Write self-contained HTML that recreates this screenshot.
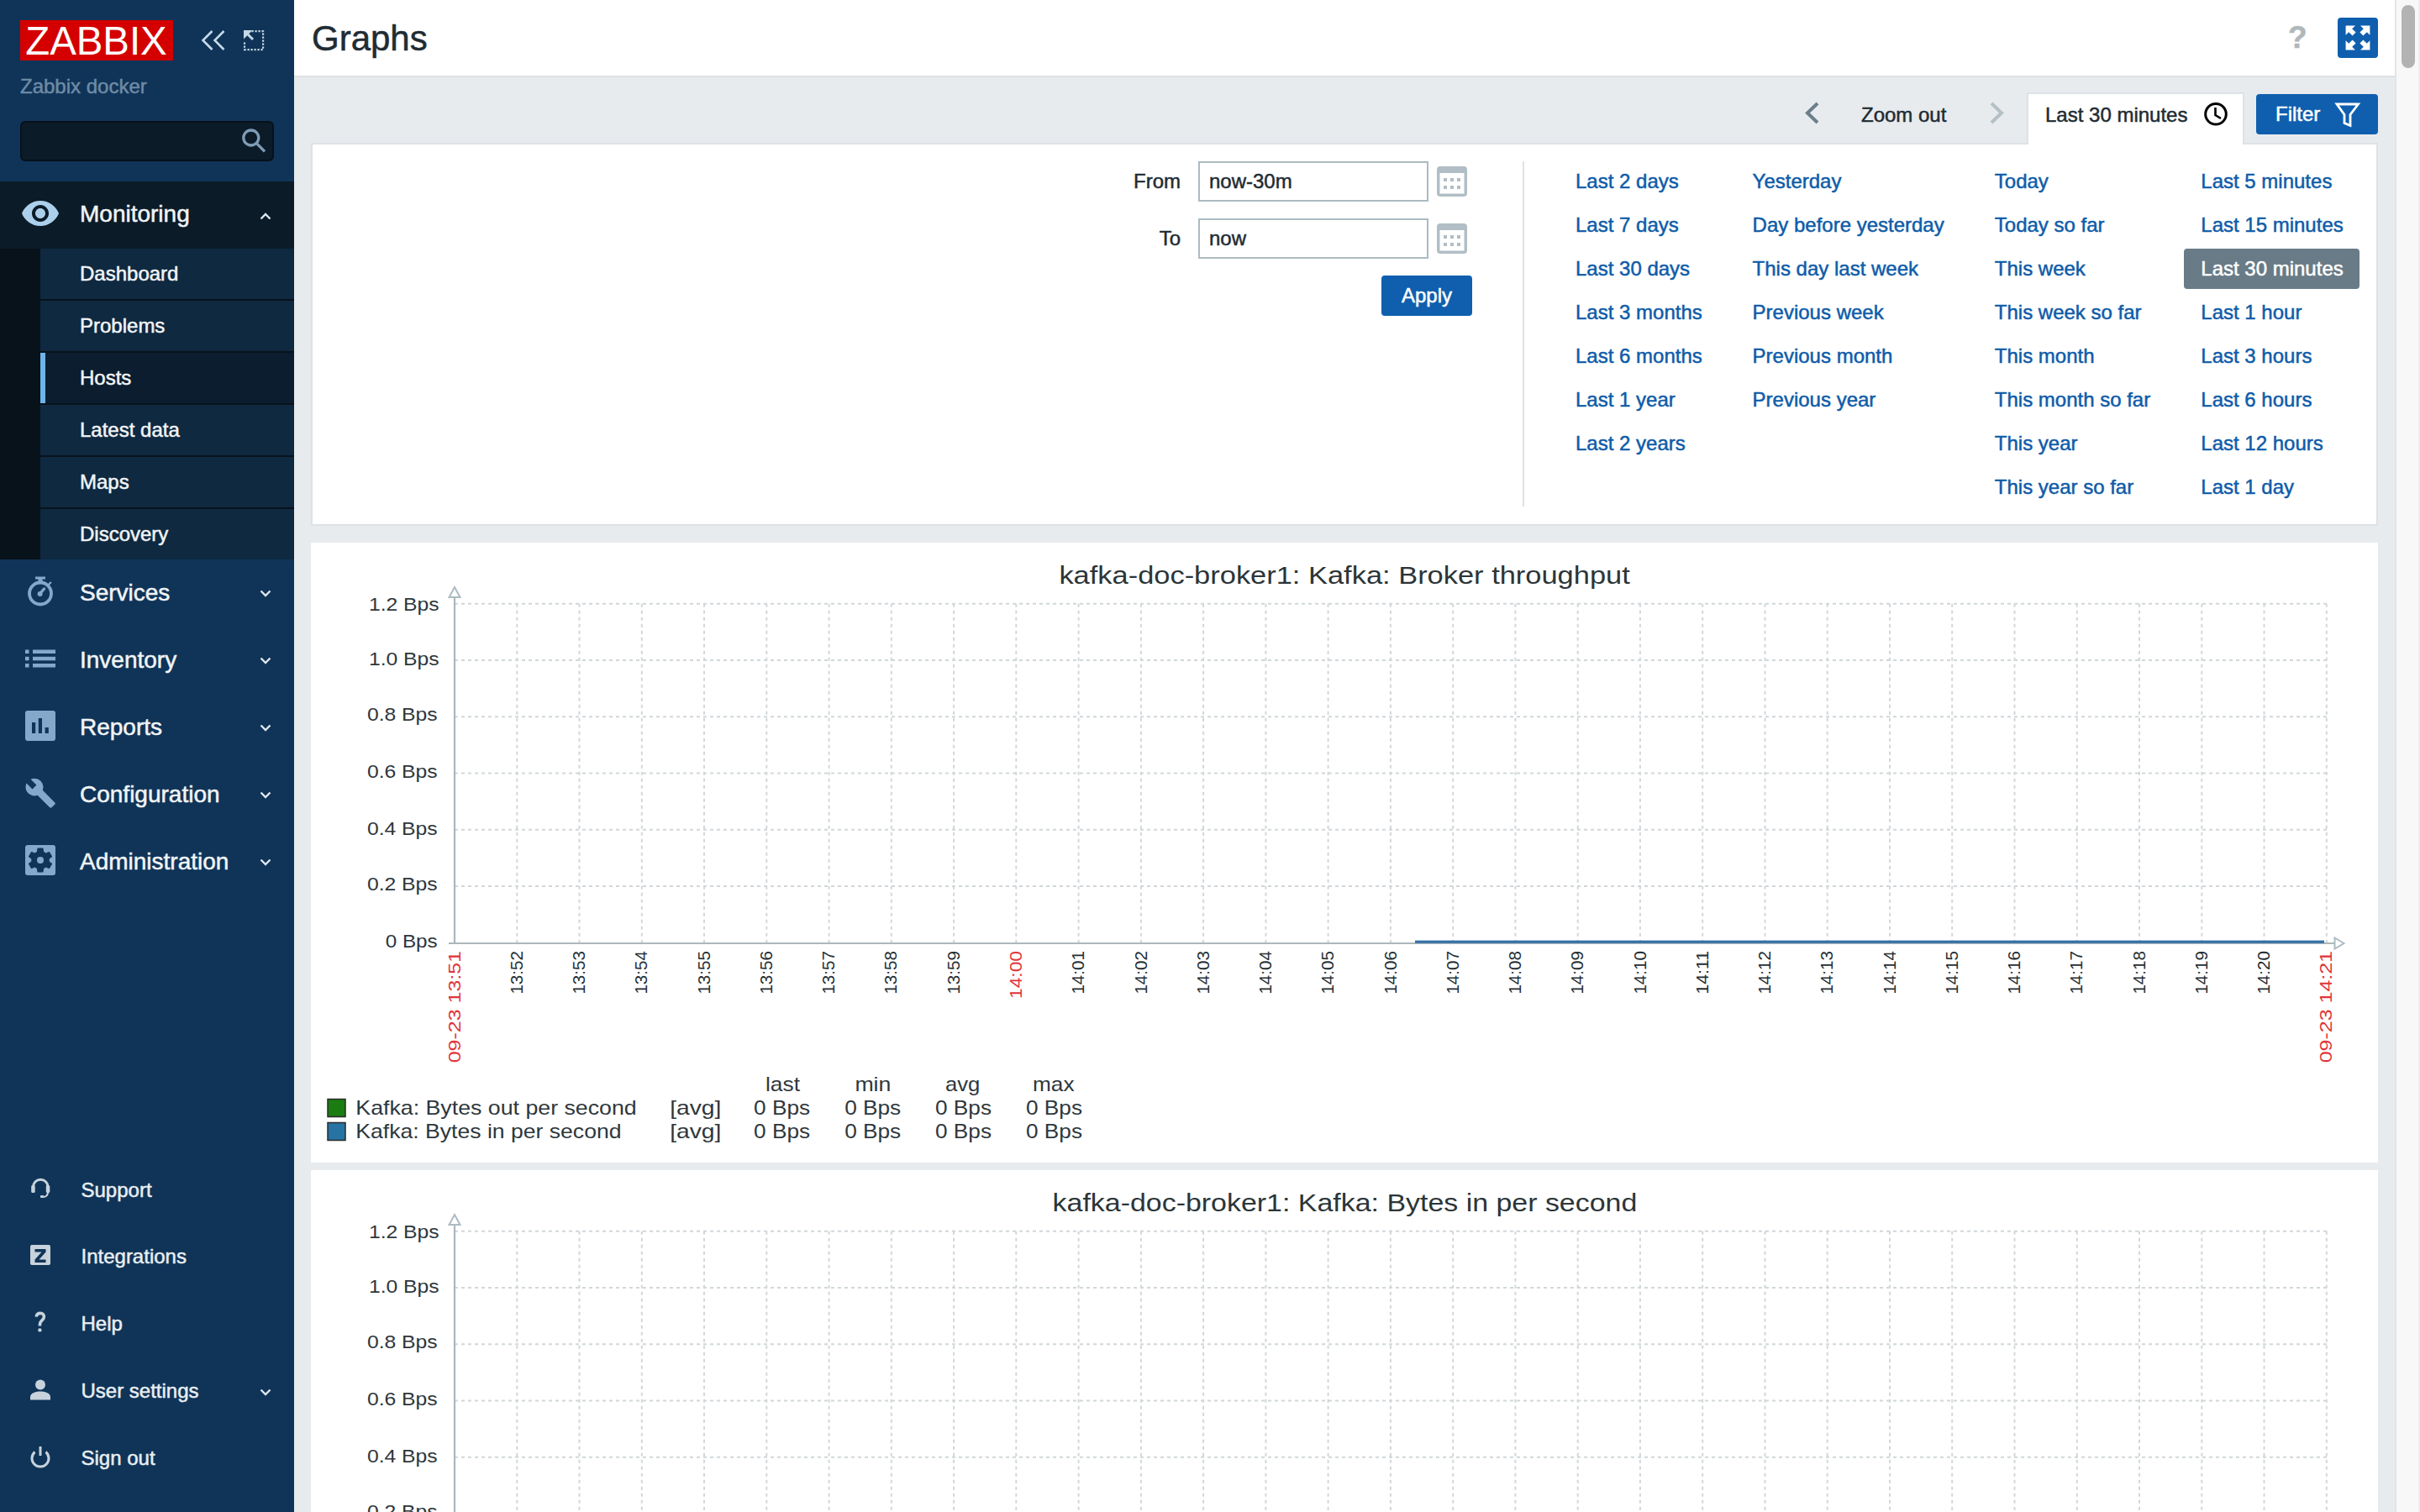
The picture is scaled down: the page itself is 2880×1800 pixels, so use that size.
<!DOCTYPE html>
<html><head><meta charset="utf-8"><title>Graphs</title>
<style>
html,body{margin:0;padding:0;}
div{-webkit-text-stroke-width:0.5px;}
body{width:2880px;height:1800px;overflow:hidden;position:relative;font-family:"Liberation Sans", sans-serif;background:#e8ebee;}
</style></head><body>
<div style="position:absolute;left:0;top:0;width:350px;height:1800px;background:#0f3458"></div><div style="position:absolute;left:24px;top:24px;width:182px;height:48px;background:#d40000"></div><svg style="position:absolute;left:24px;top:24px" width="182" height="48" viewBox="24 24 182 48"><text x="30.2" y="64.8" font-family='"Liberation Sans", sans-serif' font-size="48.4" fill="#fff" textLength="168.5" lengthAdjust="spacingAndGlyphs">ZABBIX</text></svg><svg style="position:absolute;left:230px;top:25px" width="100" height="50" viewBox="230 25 100 50"><path d="M252.5 37 L241.5 48 L252.5 59 M266.5 37 L255.5 48 L266.5 59" fill="none" stroke="#c6d9e8" stroke-width="2.6"/><path d="M290 36 L300.5 36 L290 46.5 Z" fill="#c6d9e8"/><path d="M293 39 L301 47" stroke="#c6d9e8" stroke-width="3"/><path d="M299.5 37.1 H313.1 V59.1 H291 V50.5" fill="none" stroke="#c6d9e8" stroke-width="2.2" stroke-dasharray="2.2 1.8"/></svg><div style="position:absolute;left:24px;top:89.28px;font-size:24px;line-height:27.58px;color:#6e8ba6;white-space:nowrap;">Zabbix docker</div><div style="position:absolute;left:24px;top:144px;width:298px;height:44px;background:#0b1b28;border:2px solid #07111a;border-radius:6px"></div><svg style="position:absolute;left:280px;top:150px" width="40" height="40" viewBox="280 150 40 40"><circle cx="298.8" cy="164" r="9" fill="none" stroke="#7f9cb5" stroke-width="3.3"/><path d="M305.6 170.8 L315 180.4" stroke="#7f9cb5" stroke-width="3.3"/></svg><div style="position:absolute;left:0;top:216px;width:350px;height:80px;background:#0b1b28"></div><svg style="position:absolute;left:24px;top:230px" width="48" height="48" viewBox="0 0 24 24" ><g transform="translate(0,0)"><path fill="#acd0ec" d="M12 4.5C7 4.5 2.73 7.61 1 12c1.73 4.39 6 7.5 11 7.5s9.27-3.11 11-7.5c-1.73-4.39-6-7.5-11-7.5zM12 17c-2.76 0-5-2.24-5-5s2.24-5 5-5 5 2.24 5 5-2.24 5-5 5zm0-8c-1.66 0-3 1.34-3 3s1.34 3 3 3 3-1.34 3-3-1.34-3-3-3z"/></g></svg><div style="position:absolute;left:95px;top:239.16px;font-size:28px;line-height:32.17px;color:#f2f4f6;white-space:nowrap;">Monitoring</div><svg style="position:absolute;left:308px;top:252px" width="16" height="11"><path d="M2.5 8.5 L8 3 L13.5 8.5" fill="none" stroke="#dfe7ee" stroke-width="2.4"/></svg><div style="position:absolute;left:0;top:296px;width:48px;height:370px;background:#08121a"></div><div style="position:absolute;left:48px;top:296px;width:302px;height:60px;background:#0e2940"></div><div style="position:absolute;left:48px;top:356px;width:302px;height:2px;background:#08131c"></div><div style="position:absolute;left:95px;top:312.48px;font-size:24px;line-height:27.58px;color:#f2f4f6;white-space:nowrap;">Dashboard</div><div style="position:absolute;left:48px;top:358px;width:302px;height:60px;background:#0e2940"></div><div style="position:absolute;left:48px;top:418px;width:302px;height:2px;background:#08131c"></div><div style="position:absolute;left:95px;top:374.48px;font-size:24px;line-height:27.58px;color:#f2f4f6;white-space:nowrap;">Problems</div><div style="position:absolute;left:48px;top:420px;width:302px;height:60px;background:#0b1d2e"></div><div style="position:absolute;left:48px;top:480px;width:302px;height:2px;background:#08131c"></div><div style="position:absolute;left:48px;top:420px;width:6px;height:60px;background:#6cb4ea"></div><div style="position:absolute;left:95px;top:436.48px;font-size:24px;line-height:27.58px;color:#f2f4f6;white-space:nowrap;">Hosts</div><div style="position:absolute;left:48px;top:482px;width:302px;height:60px;background:#0e2940"></div><div style="position:absolute;left:48px;top:542px;width:302px;height:2px;background:#08131c"></div><div style="position:absolute;left:95px;top:498.48px;font-size:24px;line-height:27.58px;color:#f2f4f6;white-space:nowrap;">Latest data</div><div style="position:absolute;left:48px;top:544px;width:302px;height:60px;background:#0e2940"></div><div style="position:absolute;left:48px;top:604px;width:302px;height:2px;background:#08131c"></div><div style="position:absolute;left:95px;top:560.48px;font-size:24px;line-height:27.58px;color:#f2f4f6;white-space:nowrap;">Maps</div><div style="position:absolute;left:48px;top:606px;width:302px;height:60px;background:#0e2940"></div><div style="position:absolute;left:95px;top:622.48px;font-size:24px;line-height:27.58px;color:#f2f4f6;white-space:nowrap;">Discovery</div><div style="position:absolute;left:95px;top:690.16px;font-size:28px;line-height:32.17px;color:#f2f4f6;white-space:nowrap;">Services</div><svg style="position:absolute;left:308px;top:701px" width="16" height="11"><path d="M2.5 2.5 L8 8 L13.5 2.5" fill="none" stroke="#dfe7ee" stroke-width="2.4"/></svg><div style="position:absolute;left:95px;top:770.16px;font-size:28px;line-height:32.17px;color:#f2f4f6;white-space:nowrap;">Inventory</div><svg style="position:absolute;left:308px;top:781px" width="16" height="11"><path d="M2.5 2.5 L8 8 L13.5 2.5" fill="none" stroke="#dfe7ee" stroke-width="2.4"/></svg><div style="position:absolute;left:95px;top:850.16px;font-size:28px;line-height:32.17px;color:#f2f4f6;white-space:nowrap;">Reports</div><svg style="position:absolute;left:308px;top:861px" width="16" height="11"><path d="M2.5 2.5 L8 8 L13.5 2.5" fill="none" stroke="#dfe7ee" stroke-width="2.4"/></svg><div style="position:absolute;left:95px;top:930.16px;font-size:28px;line-height:32.17px;color:#f2f4f6;white-space:nowrap;">Configuration</div><svg style="position:absolute;left:308px;top:941px" width="16" height="11"><path d="M2.5 2.5 L8 8 L13.5 2.5" fill="none" stroke="#dfe7ee" stroke-width="2.4"/></svg><div style="position:absolute;left:95px;top:1010.16px;font-size:28px;line-height:32.17px;color:#f2f4f6;white-space:nowrap;">Administration</div><svg style="position:absolute;left:308px;top:1021px" width="16" height="11"><path d="M2.5 2.5 L8 8 L13.5 2.5" fill="none" stroke="#dfe7ee" stroke-width="2.4"/></svg><svg style="position:absolute;left:0;top:660px" width="100" height="420" viewBox="0 660 100 420"><circle cx="48" cy="706.5" r="13" fill="none" stroke="#84a8ca" stroke-width="3.8"/><rect x="42" y="686.5" width="12" height="3" fill="#84a8ca"/><rect x="45.5" y="689" width="5" height="4" fill="#84a8ca"/><path d="M57.5 696.5 L60.8 693" stroke="#84a8ca" stroke-width="2.4"/><circle cx="47.6" cy="706.9" r="3" fill="#84a8ca"/><path d="M47.6 706.6 L52.6 700.9" stroke="#84a8ca" stroke-width="3.2" stroke-linecap="round"/><rect x="30" y="773.5" width="4.5" height="4.5" fill="#84a8ca"/><rect x="39" y="773.5" width="27" height="4.5" fill="#84a8ca"/><rect x="30" y="781.8" width="4.5" height="4.5" fill="#84a8ca"/><rect x="39" y="781.8" width="27" height="4.5" fill="#84a8ca"/><rect x="30" y="790" width="4.5" height="4.5" fill="#84a8ca"/><rect x="39" y="790" width="27" height="4.5" fill="#84a8ca"/><rect x="30" y="846" width="36" height="36" rx="3" fill="#84a8ca"/><rect x="38" y="860" width="4.2" height="13" fill="#0f3458"/><rect x="45.8" y="855" width="4.2" height="18" fill="#0f3458"/><rect x="53.6" y="866" width="4.2" height="7" fill="#0f3458"/><g transform="translate(29,925) scale(1.6)"><path fill="#84a8ca" d="M22.7 19l-9.1-9.1c.9-2.3.4-5-1.5-6.9-2-2-5-2.4-7.4-1.3L9 6 6 9 1.6 4.7C.4 7.1.9 10.1 2.9 12.1c1.9 1.9 4.6 2.4 6.9 1.5l9.1 9.1c.4.4 1 .4 1.4 0l2.3-2.3c.5-.4.5-1.1.1-1.4z"/></g><rect x="30" y="1006" width="36" height="36" rx="3" fill="#84a8ca"/><g transform="translate(30,1006) scale(1.5)"><path fill="#0f3458" d="M19.14 12.94c.04-.3.06-.61.06-.94 0-.32-.02-.64-.07-.94l2.03-1.58c.18-.14.23-.41.12-.61l-1.92-3.32c-.12-.22-.37-.29-.59-.22l-2.39.96c-.5-.38-1.03-.7-1.62-.94l-.36-2.54c-.04-.24-.24-.41-.48-.41h-3.84c-.24 0-.43.17-.47.41l-.36 2.54c-.59.24-1.13.57-1.62.94l-2.39-.96c-.22-.08-.47 0-.59.22L2.74 8.87c-.12.21-.08.47.12.61l2.03 1.58c-.05.3-.09.63-.09.94s.02.64.07.94l-2.03 1.58c-.18.14-.23.41-.12.61l1.92 3.32c.12.22.37.29.59.22l2.39-.96c.5.38 1.03.7 1.62.94l.36 2.54c.05.24.24.41.48.41h3.84c.24 0 .44-.17.47-.41l.36-2.54c.59-.24 1.13-.56 1.62-.94l2.39.96c.22.08.47 0 .59-.22l1.92-3.32c.12-.22.07-.47-.12-.61l-2.01-1.58zM12 14.7a2.7 2.7 0 1 1 0-5.4a2.7 2.7 0 1 1 0 5.4z"/></g></svg><div style="position:absolute;left:96.5px;top:1402.68px;font-size:24px;line-height:27.58px;color:#e9eef2;white-space:nowrap;">Support</div><div style="position:absolute;left:96.5px;top:1482.48px;font-size:24px;line-height:27.58px;color:#e9eef2;white-space:nowrap;">Integrations</div><div style="position:absolute;left:96.5px;top:1562.28px;font-size:24px;line-height:27.58px;color:#e9eef2;white-space:nowrap;">Help</div><div style="position:absolute;left:96.5px;top:1642.08px;font-size:24px;line-height:27.58px;color:#e9eef2;white-space:nowrap;">User settings</div><div style="position:absolute;left:96.5px;top:1721.88px;font-size:24px;line-height:27.58px;color:#e9eef2;white-space:nowrap;">Sign out</div><svg style="position:absolute;left:308px;top:1652px" width="16" height="11"><path d="M2.5 2.5 L8 8 L13.5 2.5" fill="none" stroke="#dfe7ee" stroke-width="2.4"/></svg><svg style="position:absolute;left:0;top:1390px" width="100" height="370" viewBox="0 1390 100 370"><path d="M39.5 1418 V1413 A8.7 8.7 0 0 1 57 1413 V1418" fill="none" stroke="#c7d2dc" stroke-width="3"/><rect x="37.2" y="1411" width="4.5" height="9" rx="1.5" fill="#c7d2dc"/><rect x="54.8" y="1411" width="4.5" height="9" rx="1.5" fill="#c7d2dc"/><path d="M57 1419 Q57 1425 51 1425" fill="none" stroke="#c7d2dc" stroke-width="2"/><rect x="48" y="1423" width="4" height="3" rx="1" fill="#c7d2dc"/><rect x="36" y="1482" width="24" height="24" rx="2" fill="#c7d2dc"/><path d="M41.5 1487 H54.5 V1490.5 L46.5 1499.5 H54.5 V1503 H41.5 V1499.5 L49.5 1490.5 H41.5 Z" fill="#0f3458"/><circle cx="48" cy="1648.5" r="6" fill="#c7d2dc"/><path d="M36 1666.5 V1663 C36 1658 43 1656.5 48 1656.5 C53 1656.5 60 1658 60 1663 V1666.5 Z" fill="#c7d2dc"/><path d="M41.5 1728.5 A10 10 0 1 0 54.5 1728.5" fill="none" stroke="#c7d2dc" stroke-width="3"/><rect x="46.5" y="1722" width="3" height="11" fill="#c7d2dc"/></svg><svg style="position:absolute;left:30px;top:1555px" width="40" height="40" viewBox="30 1555 40 40"><path d="M43.2 1567.6 C43.6 1564.4 45.8 1563.4 48 1563.4 C50.8 1563.4 52.4 1565.2 52.4 1567.6 C52.4 1570.2 50.4 1571.6 48.9 1573 C47.8 1574 47.4 1575 47.4 1578.4" fill="none" stroke="#c7d2dc" stroke-width="3.6"/><circle cx="47.4" cy="1583.4" r="2.2" fill="#c7d2dc"/></svg><div style="position:absolute;left:350px;top:0;width:2500px;height:90px;background:#ffffff;border-bottom:2px solid #dde2e6"></div><div style="position:absolute;left:350px;top:92px;width:2500px;height:1708px;background:#e8ebee"></div><div style="position:absolute;left:371px;top:22.29px;font-size:42px;line-height:48.26px;color:#1f2c33;white-space:nowrap;">Graphs</div><div style="position:absolute;left:2723px;top:23.52px;font-size:37px;line-height:42.51px;color:#b0b8bc;white-space:nowrap;font-weight:bold">?</div><div style="position:absolute;left:2782px;top:21px;width:48px;height:48px;background:#0f5fae;border-radius:4px"></div><svg style="position:absolute;left:2782px;top:21px" width="48" height="48" viewBox="0 0 48 48" fill="#fff"><path d="M9.6 9.4 H21 L17.2 13.2 L21.6 17.6 L17.6 21.6 L13.2 17.2 L9.6 20.8 Z"/><path d="M38.4 9.4 H27 L30.8 13.2 L26.4 17.6 L30.4 21.6 L34.8 17.2 L38.4 20.8 Z"/><path d="M9.6 38.6 H21 L17.2 34.8 L21.6 30.4 L17.6 26.4 L13.2 30.8 L9.6 27.2 Z"/><path d="M38.4 38.6 H27 L30.8 34.8 L26.4 30.4 L30.4 26.4 L34.8 30.8 L38.4 27.2 Z"/></svg><svg style="position:absolute;left:2140px;top:115px" width="260" height="40" viewBox="2140 115 260 40"><path d="M2163 123 L2151 134.5 L2163 146" fill="none" stroke="#6a7f8b" stroke-width="4"/><path d="M2370 123 L2382 134.5 L2370 146" fill="none" stroke="#b4c0c6" stroke-width="4"/></svg><div style="position:absolute;left:2215px;top:123.08px;font-size:24px;line-height:27.58px;color:#1f2c33;white-space:nowrap;">Zoom out</div><div style="position:absolute;left:2412px;top:110px;width:255px;height:70px;background:#fff;border:2px solid #dde2e6;border-bottom:none"></div><div style="position:absolute;left:2434px;top:123.08px;font-size:24px;line-height:27.58px;color:#1f2c33;white-space:nowrap;">Last 30 minutes</div><svg style="position:absolute;left:2618px;top:118px" width="38" height="36" viewBox="2618 118 38 36"><circle cx="2637" cy="135.8" r="12.3" fill="none" stroke="#000" stroke-width="3"/><path d="M2636.5 128 V137 L2643 141" fill="none" stroke="#000" stroke-width="2.6"/></svg><div style="position:absolute;left:2685px;top:112px;width:145px;height:48px;background:#0f5fae;border-radius:4px"></div><div style="position:absolute;left:2708px;top:121.88px;font-size:24px;line-height:27.58px;color:#ffffff;white-space:nowrap;">Filter</div><svg style="position:absolute;left:2772px;top:118px" width="42" height="38" viewBox="2772 118 42 38"><path d="M2781 124 H2806.5 L2797 136.5 V149.5 L2790 146.5 V136.5 Z" fill="none" stroke="#fff" stroke-width="2.8" stroke-linejoin="miter"/></svg><div style="position:absolute;left:370px;top:170px;width:2456px;height:452px;background:#fff;border:2px solid #dde2e6"></div><div style="position:absolute;left:2414px;top:170px;width:255px;height:4px;background:#fff"></div><div style="position:absolute;right:1475px;top:202.28px;font-size:24px;line-height:27.58px;color:#1f2c33;white-space:nowrap;">From</div><div style="position:absolute;right:1475px;top:269.78px;font-size:24px;line-height:27.58px;color:#1f2c33;white-space:nowrap;">To</div><div style="position:absolute;left:1426px;top:192px;width:270px;height:44px;background:#fff;border:2px solid #acbbc2"></div><div style="position:absolute;left:1439px;top:202.28px;font-size:24px;line-height:27.58px;color:#1f2c33;white-space:nowrap;">now-30m</div><svg style="position:absolute;left:1710px;top:198px" width="36" height="36" viewBox="0 0 36 36"><rect x="0" y="0" width="36" height="36" rx="4" fill="#b1bec5"/><rect x="3.5" y="8" width="29" height="24.5" fill="#fff"/><g fill="#b1bec5"><rect x="8" y="14" width="4" height="4"/><rect x="16" y="14" width="4" height="4"/><rect x="24" y="14" width="4" height="4"/><rect x="8" y="23" width="4" height="4"/><rect x="16" y="23" width="4" height="4"/><rect x="24" y="23" width="4" height="4"/></g></svg><div style="position:absolute;left:1426px;top:260px;width:270px;height:44px;background:#fff;border:2px solid #acbbc2"></div><div style="position:absolute;left:1439px;top:270.28px;font-size:24px;line-height:27.58px;color:#1f2c33;white-space:nowrap;">now</div><svg style="position:absolute;left:1710px;top:266px" width="36" height="36" viewBox="0 0 36 36"><rect x="0" y="0" width="36" height="36" rx="4" fill="#b1bec5"/><rect x="3.5" y="8" width="29" height="24.5" fill="#fff"/><g fill="#b1bec5"><rect x="8" y="14" width="4" height="4"/><rect x="16" y="14" width="4" height="4"/><rect x="24" y="14" width="4" height="4"/><rect x="8" y="23" width="4" height="4"/><rect x="16" y="23" width="4" height="4"/><rect x="24" y="23" width="4" height="4"/></g></svg><div style="position:absolute;left:1644px;top:328px;width:108px;height:48px;background:#0f5fae;border-radius:4px"></div><div style="position:absolute;left:1668px;top:337.78px;font-size:24px;line-height:27.58px;color:#ffffff;white-space:nowrap;">Apply</div><div style="position:absolute;left:1812px;top:192px;width:2px;height:411px;background:#dde2e6"></div><div style="position:absolute;left:1875px;top:202.28px;font-size:24px;line-height:27.58px;color:#0f5ca9;white-space:nowrap;">Last 2 days</div><div style="position:absolute;left:1875px;top:254.18px;font-size:24px;line-height:27.58px;color:#0f5ca9;white-space:nowrap;">Last 7 days</div><div style="position:absolute;left:1875px;top:306.08px;font-size:24px;line-height:27.58px;color:#0f5ca9;white-space:nowrap;">Last 30 days</div><div style="position:absolute;left:1875px;top:357.98px;font-size:24px;line-height:27.58px;color:#0f5ca9;white-space:nowrap;">Last 3 months</div><div style="position:absolute;left:1875px;top:409.88px;font-size:24px;line-height:27.58px;color:#0f5ca9;white-space:nowrap;">Last 6 months</div><div style="position:absolute;left:1875px;top:461.78px;font-size:24px;line-height:27.58px;color:#0f5ca9;white-space:nowrap;">Last 1 year</div><div style="position:absolute;left:1875px;top:513.68px;font-size:24px;line-height:27.58px;color:#0f5ca9;white-space:nowrap;">Last 2 years</div><div style="position:absolute;left:2085.6px;top:202.28px;font-size:24px;line-height:27.58px;color:#0f5ca9;white-space:nowrap;">Yesterday</div><div style="position:absolute;left:2085.6px;top:254.18px;font-size:24px;line-height:27.58px;color:#0f5ca9;white-space:nowrap;">Day before yesterday</div><div style="position:absolute;left:2085.6px;top:306.08px;font-size:24px;line-height:27.58px;color:#0f5ca9;white-space:nowrap;">This day last week</div><div style="position:absolute;left:2085.6px;top:357.98px;font-size:24px;line-height:27.58px;color:#0f5ca9;white-space:nowrap;">Previous week</div><div style="position:absolute;left:2085.6px;top:409.88px;font-size:24px;line-height:27.58px;color:#0f5ca9;white-space:nowrap;">Previous month</div><div style="position:absolute;left:2085.6px;top:461.78px;font-size:24px;line-height:27.58px;color:#0f5ca9;white-space:nowrap;">Previous year</div><div style="position:absolute;left:2373.8px;top:202.28px;font-size:24px;line-height:27.58px;color:#0f5ca9;white-space:nowrap;">Today</div><div style="position:absolute;left:2373.8px;top:254.18px;font-size:24px;line-height:27.58px;color:#0f5ca9;white-space:nowrap;">Today so far</div><div style="position:absolute;left:2373.8px;top:306.08px;font-size:24px;line-height:27.58px;color:#0f5ca9;white-space:nowrap;">This week</div><div style="position:absolute;left:2373.8px;top:357.98px;font-size:24px;line-height:27.58px;color:#0f5ca9;white-space:nowrap;">This week so far</div><div style="position:absolute;left:2373.8px;top:409.88px;font-size:24px;line-height:27.58px;color:#0f5ca9;white-space:nowrap;">This month</div><div style="position:absolute;left:2373.8px;top:461.78px;font-size:24px;line-height:27.58px;color:#0f5ca9;white-space:nowrap;">This month so far</div><div style="position:absolute;left:2373.8px;top:513.68px;font-size:24px;line-height:27.58px;color:#0f5ca9;white-space:nowrap;">This year</div><div style="position:absolute;left:2373.8px;top:565.58px;font-size:24px;line-height:27.58px;color:#0f5ca9;white-space:nowrap;">This year so far</div><div style="position:absolute;left:2619.3px;top:202.28px;font-size:24px;line-height:27.58px;color:#0f5ca9;white-space:nowrap;">Last 5 minutes</div><div style="position:absolute;left:2619.3px;top:254.18px;font-size:24px;line-height:27.58px;color:#0f5ca9;white-space:nowrap;">Last 15 minutes</div><div style="position:absolute;left:2599px;top:296px;width:209px;height:48px;background:#687b87;border-radius:4px"></div><div style="position:absolute;left:2619.3px;top:306.08px;font-size:24px;line-height:27.58px;color:#ffffff;white-space:nowrap;">Last 30 minutes</div><div style="position:absolute;left:2619.3px;top:357.98px;font-size:24px;line-height:27.58px;color:#0f5ca9;white-space:nowrap;">Last 1 hour</div><div style="position:absolute;left:2619.3px;top:409.88px;font-size:24px;line-height:27.58px;color:#0f5ca9;white-space:nowrap;">Last 3 hours</div><div style="position:absolute;left:2619.3px;top:461.78px;font-size:24px;line-height:27.58px;color:#0f5ca9;white-space:nowrap;">Last 6 hours</div><div style="position:absolute;left:2619.3px;top:513.68px;font-size:24px;line-height:27.58px;color:#0f5ca9;white-space:nowrap;">Last 12 hours</div><div style="position:absolute;left:2619.3px;top:565.58px;font-size:24px;line-height:27.58px;color:#0f5ca9;white-space:nowrap;">Last 1 day</div><div style="position:absolute;left:370px;top:646px;width:2460px;height:738px;background:#fff"></div><svg style="position:absolute;left:370px;top:646px" width="2460" height="738" viewBox="370 646 2460 738" font-family='"Liberation Sans", sans-serif'><text x="1260.4" y="695" font-size="30" fill="#2c3538" textLength="679.4" lengthAdjust="spacingAndGlyphs">kafka-doc-broker1: Kafka: Broker throughput</text><path d="M541 718.8 H2769 M541 786.0 H2769 M541 853.3 H2769 M541 920.5 H2769 M541 987.8 H2769 M541 1055.0 H2769 M615.3 718.8 V1122 M689.5 718.8 V1122 M763.8 718.8 V1122 M838.0 718.8 V1122 M912.3 718.8 V1122 M986.6 718.8 V1122 M1060.8 718.8 V1122 M1135.1 718.8 V1122 M1209.3 718.8 V1122 M1283.6 718.8 V1122 M1357.9 718.8 V1122 M1432.1 718.8 V1122 M1506.4 718.8 V1122 M1580.6 718.8 V1122 M1654.9 718.8 V1122 M1729.2 718.8 V1122 M1803.4 718.8 V1122 M1877.7 718.8 V1122 M1951.9 718.8 V1122 M2026.2 718.8 V1122 M2100.5 718.8 V1122 M2174.7 718.8 V1122 M2249.0 718.8 V1122 M2323.2 718.8 V1122 M2397.5 718.8 V1122 M2471.8 718.8 V1122 M2546.0 718.8 V1122 M2620.3 718.8 V1122 M2694.5 718.8 V1122 M2768.8 718.8 V1122 " stroke="#d1d7da" stroke-width="2" stroke-dasharray="4 4" fill="none"/><path d="M541 710 V1124 M534 1123 H2779" stroke="#adb6bb" stroke-width="2.2" fill="none"/><path d="M541 699 L547.5 711 H534.5 Z" fill="#fff" stroke="#acbbc2" stroke-width="2"/><path d="M2789.5 1123 L2778.5 1116.5 V1129.5 Z" fill="#fff" stroke="#acbbc2" stroke-width="2"/><rect x="1684" y="1119.6" width="1082" height="3.2" fill="#3470a6"/><text x="438.9" y="726.5" font-size="22.3" fill="#2e373c" textLength="83.8" lengthAdjust="spacingAndGlyphs">1.2 Bps</text><text x="438.9" y="792.4" font-size="22.3" fill="#2e373c" textLength="83.8" lengthAdjust="spacingAndGlyphs">1.0 Bps</text><text x="436.9" y="857.8" font-size="22.3" fill="#2e373c" textLength="83.8" lengthAdjust="spacingAndGlyphs">0.8 Bps</text><text x="436.9" y="925.8" font-size="22.3" fill="#2e373c" textLength="83.8" lengthAdjust="spacingAndGlyphs">0.6 Bps</text><text x="436.9" y="994.2" font-size="22.3" fill="#2e373c" textLength="83.8" lengthAdjust="spacingAndGlyphs">0.4 Bps</text><text x="436.9" y="1060.4" font-size="22.3" fill="#2e373c" textLength="83.8" lengthAdjust="spacingAndGlyphs">0.2 Bps</text><text x="458.7" y="1127.7" font-size="22.3" fill="#2e373c" textLength="62" lengthAdjust="spacingAndGlyphs">0 Bps</text><text transform="translate(547.6,1265.3) rotate(-90)" font-size="20.6" fill="#e0353a" textLength="133.3" lengthAdjust="spacingAndGlyphs">09-23 13:51</text><text transform="translate(621.9,1183.6) rotate(-90)" font-size="20.6" fill="#252e33" textLength="51.6" lengthAdjust="spacingAndGlyphs">13:52</text><text transform="translate(696.1,1183.6) rotate(-90)" font-size="20.6" fill="#252e33" textLength="51.6" lengthAdjust="spacingAndGlyphs">13:53</text><text transform="translate(770.4,1183.6) rotate(-90)" font-size="20.6" fill="#252e33" textLength="51.6" lengthAdjust="spacingAndGlyphs">13:54</text><text transform="translate(844.6,1183.6) rotate(-90)" font-size="20.6" fill="#252e33" textLength="51.6" lengthAdjust="spacingAndGlyphs">13:55</text><text transform="translate(918.9,1183.6) rotate(-90)" font-size="20.6" fill="#252e33" textLength="51.6" lengthAdjust="spacingAndGlyphs">13:56</text><text transform="translate(993.2,1183.6) rotate(-90)" font-size="20.6" fill="#252e33" textLength="51.6" lengthAdjust="spacingAndGlyphs">13:57</text><text transform="translate(1067.4,1183.6) rotate(-90)" font-size="20.6" fill="#252e33" textLength="51.6" lengthAdjust="spacingAndGlyphs">13:58</text><text transform="translate(1141.7,1183.6) rotate(-90)" font-size="20.6" fill="#252e33" textLength="51.6" lengthAdjust="spacingAndGlyphs">13:59</text><text transform="translate(1215.9,1189.0) rotate(-90)" font-size="20.6" fill="#e0353a" textLength="57" lengthAdjust="spacingAndGlyphs">14:00</text><text transform="translate(1290.2,1183.6) rotate(-90)" font-size="20.6" fill="#252e33" textLength="51.6" lengthAdjust="spacingAndGlyphs">14:01</text><text transform="translate(1364.5,1183.6) rotate(-90)" font-size="20.6" fill="#252e33" textLength="51.6" lengthAdjust="spacingAndGlyphs">14:02</text><text transform="translate(1438.7,1183.6) rotate(-90)" font-size="20.6" fill="#252e33" textLength="51.6" lengthAdjust="spacingAndGlyphs">14:03</text><text transform="translate(1513.0,1183.6) rotate(-90)" font-size="20.6" fill="#252e33" textLength="51.6" lengthAdjust="spacingAndGlyphs">14:04</text><text transform="translate(1587.2,1183.6) rotate(-90)" font-size="20.6" fill="#252e33" textLength="51.6" lengthAdjust="spacingAndGlyphs">14:05</text><text transform="translate(1661.5,1183.6) rotate(-90)" font-size="20.6" fill="#252e33" textLength="51.6" lengthAdjust="spacingAndGlyphs">14:06</text><text transform="translate(1735.8,1183.6) rotate(-90)" font-size="20.6" fill="#252e33" textLength="51.6" lengthAdjust="spacingAndGlyphs">14:07</text><text transform="translate(1810.0,1183.6) rotate(-90)" font-size="20.6" fill="#252e33" textLength="51.6" lengthAdjust="spacingAndGlyphs">14:08</text><text transform="translate(1884.3,1183.6) rotate(-90)" font-size="20.6" fill="#252e33" textLength="51.6" lengthAdjust="spacingAndGlyphs">14:09</text><text transform="translate(1958.5,1183.6) rotate(-90)" font-size="20.6" fill="#252e33" textLength="51.6" lengthAdjust="spacingAndGlyphs">14:10</text><text transform="translate(2032.8,1183.6) rotate(-90)" font-size="20.6" fill="#252e33" textLength="51.6" lengthAdjust="spacingAndGlyphs">14:11</text><text transform="translate(2107.1,1183.6) rotate(-90)" font-size="20.6" fill="#252e33" textLength="51.6" lengthAdjust="spacingAndGlyphs">14:12</text><text transform="translate(2181.3,1183.6) rotate(-90)" font-size="20.6" fill="#252e33" textLength="51.6" lengthAdjust="spacingAndGlyphs">14:13</text><text transform="translate(2255.6,1183.6) rotate(-90)" font-size="20.6" fill="#252e33" textLength="51.6" lengthAdjust="spacingAndGlyphs">14:14</text><text transform="translate(2329.8,1183.6) rotate(-90)" font-size="20.6" fill="#252e33" textLength="51.6" lengthAdjust="spacingAndGlyphs">14:15</text><text transform="translate(2404.1,1183.6) rotate(-90)" font-size="20.6" fill="#252e33" textLength="51.6" lengthAdjust="spacingAndGlyphs">14:16</text><text transform="translate(2478.4,1183.6) rotate(-90)" font-size="20.6" fill="#252e33" textLength="51.6" lengthAdjust="spacingAndGlyphs">14:17</text><text transform="translate(2552.6,1183.6) rotate(-90)" font-size="20.6" fill="#252e33" textLength="51.6" lengthAdjust="spacingAndGlyphs">14:18</text><text transform="translate(2626.9,1183.6) rotate(-90)" font-size="20.6" fill="#252e33" textLength="51.6" lengthAdjust="spacingAndGlyphs">14:19</text><text transform="translate(2701.1,1183.6) rotate(-90)" font-size="20.6" fill="#252e33" textLength="51.6" lengthAdjust="spacingAndGlyphs">14:20</text><text transform="translate(2775.4,1265.3) rotate(-90)" font-size="20.6" fill="#e0353a" textLength="133.3" lengthAdjust="spacingAndGlyphs">09-23 14:21</text><rect x="390" y="1308.5" width="21" height="21" fill="#1b7c12" stroke="#2a2a2a" stroke-width="1.5"/><rect x="390" y="1336.5" width="21" height="21" fill="#2774a4" stroke="#2a2a2a" stroke-width="1.5"/><text x="911" y="1299.3" font-size="24" fill="#2e373c" textLength="41" lengthAdjust="spacingAndGlyphs">last</text><text x="1017.4" y="1299.3" font-size="24" fill="#2e373c" textLength="43" lengthAdjust="spacingAndGlyphs">min</text><text x="1124.9" y="1299.3" font-size="24" fill="#2e373c" textLength="41.4" lengthAdjust="spacingAndGlyphs">avg</text><text x="1229" y="1299.3" font-size="24" fill="#2e373c" textLength="49.5" lengthAdjust="spacingAndGlyphs">max</text><text x="423.3" y="1327" font-size="24" fill="#2e373c" textLength="334.4" lengthAdjust="spacingAndGlyphs">Kafka: Bytes out per second</text><text x="797.2" y="1327" font-size="24" fill="#2e373c" textLength="61.2" lengthAdjust="spacingAndGlyphs">[avg]</text><text x="897.1" y="1327" font-size="24" fill="#2e373c" textLength="67" lengthAdjust="spacingAndGlyphs">0 Bps</text><text x="1005.2" y="1327" font-size="24" fill="#2e373c" textLength="67" lengthAdjust="spacingAndGlyphs">0 Bps</text><text x="1113" y="1327" font-size="24" fill="#2e373c" textLength="67" lengthAdjust="spacingAndGlyphs">0 Bps</text><text x="1221" y="1327" font-size="24" fill="#2e373c" textLength="67" lengthAdjust="spacingAndGlyphs">0 Bps</text><text x="423.3" y="1355" font-size="24" fill="#2e373c" textLength="316.2" lengthAdjust="spacingAndGlyphs">Kafka: Bytes in per second</text><text x="797.2" y="1355" font-size="24" fill="#2e373c" textLength="61.2" lengthAdjust="spacingAndGlyphs">[avg]</text><text x="897.1" y="1355" font-size="24" fill="#2e373c" textLength="67" lengthAdjust="spacingAndGlyphs">0 Bps</text><text x="1005.2" y="1355" font-size="24" fill="#2e373c" textLength="67" lengthAdjust="spacingAndGlyphs">0 Bps</text><text x="1113" y="1355" font-size="24" fill="#2e373c" textLength="67" lengthAdjust="spacingAndGlyphs">0 Bps</text><text x="1221" y="1355" font-size="24" fill="#2e373c" textLength="67" lengthAdjust="spacingAndGlyphs">0 Bps</text></svg><div style="position:absolute;left:370px;top:1393px;width:2460px;height:738px;background:#fff"></div><svg style="position:absolute;left:370px;top:1393px" width="2460" height="738" viewBox="370 646 2460 738" font-family='"Liberation Sans", sans-serif'><text x="1252.6" y="695" font-size="30" fill="#2c3538" textLength="695.7" lengthAdjust="spacingAndGlyphs">kafka-doc-broker1: Kafka: Bytes in per second</text><path d="M541 718.8 H2769 M541 786.0 H2769 M541 853.3 H2769 M541 920.5 H2769 M541 987.8 H2769 M541 1055.0 H2769 M615.3 718.8 V1122 M689.5 718.8 V1122 M763.8 718.8 V1122 M838.0 718.8 V1122 M912.3 718.8 V1122 M986.6 718.8 V1122 M1060.8 718.8 V1122 M1135.1 718.8 V1122 M1209.3 718.8 V1122 M1283.6 718.8 V1122 M1357.9 718.8 V1122 M1432.1 718.8 V1122 M1506.4 718.8 V1122 M1580.6 718.8 V1122 M1654.9 718.8 V1122 M1729.2 718.8 V1122 M1803.4 718.8 V1122 M1877.7 718.8 V1122 M1951.9 718.8 V1122 M2026.2 718.8 V1122 M2100.5 718.8 V1122 M2174.7 718.8 V1122 M2249.0 718.8 V1122 M2323.2 718.8 V1122 M2397.5 718.8 V1122 M2471.8 718.8 V1122 M2546.0 718.8 V1122 M2620.3 718.8 V1122 M2694.5 718.8 V1122 M2768.8 718.8 V1122 " stroke="#d1d7da" stroke-width="2" stroke-dasharray="4 4" fill="none"/><path d="M541 710 V1124 M534 1123 H2779" stroke="#adb6bb" stroke-width="2.2" fill="none"/><path d="M541 699 L547.5 711 H534.5 Z" fill="#fff" stroke="#acbbc2" stroke-width="2"/><path d="M2789.5 1123 L2778.5 1116.5 V1129.5 Z" fill="#fff" stroke="#acbbc2" stroke-width="2"/><rect x="1684" y="1119.6" width="1082" height="3.2" fill="#3470a6"/><text x="438.9" y="726.5" font-size="22.3" fill="#2e373c" textLength="83.8" lengthAdjust="spacingAndGlyphs">1.2 Bps</text><text x="438.9" y="792.4" font-size="22.3" fill="#2e373c" textLength="83.8" lengthAdjust="spacingAndGlyphs">1.0 Bps</text><text x="436.9" y="857.8" font-size="22.3" fill="#2e373c" textLength="83.8" lengthAdjust="spacingAndGlyphs">0.8 Bps</text><text x="436.9" y="925.8" font-size="22.3" fill="#2e373c" textLength="83.8" lengthAdjust="spacingAndGlyphs">0.6 Bps</text><text x="436.9" y="994.2" font-size="22.3" fill="#2e373c" textLength="83.8" lengthAdjust="spacingAndGlyphs">0.4 Bps</text><text x="436.9" y="1060.4" font-size="22.3" fill="#2e373c" textLength="83.8" lengthAdjust="spacingAndGlyphs">0.2 Bps</text><text x="458.7" y="1127.7" font-size="22.3" fill="#2e373c" textLength="62" lengthAdjust="spacingAndGlyphs">0 Bps</text><text transform="translate(547.6,1265.3) rotate(-90)" font-size="20.6" fill="#e0353a" textLength="133.3" lengthAdjust="spacingAndGlyphs">09-23 13:51</text><text transform="translate(621.9,1183.6) rotate(-90)" font-size="20.6" fill="#252e33" textLength="51.6" lengthAdjust="spacingAndGlyphs">13:52</text><text transform="translate(696.1,1183.6) rotate(-90)" font-size="20.6" fill="#252e33" textLength="51.6" lengthAdjust="spacingAndGlyphs">13:53</text><text transform="translate(770.4,1183.6) rotate(-90)" font-size="20.6" fill="#252e33" textLength="51.6" lengthAdjust="spacingAndGlyphs">13:54</text><text transform="translate(844.6,1183.6) rotate(-90)" font-size="20.6" fill="#252e33" textLength="51.6" lengthAdjust="spacingAndGlyphs">13:55</text><text transform="translate(918.9,1183.6) rotate(-90)" font-size="20.6" fill="#252e33" textLength="51.6" lengthAdjust="spacingAndGlyphs">13:56</text><text transform="translate(993.2,1183.6) rotate(-90)" font-size="20.6" fill="#252e33" textLength="51.6" lengthAdjust="spacingAndGlyphs">13:57</text><text transform="translate(1067.4,1183.6) rotate(-90)" font-size="20.6" fill="#252e33" textLength="51.6" lengthAdjust="spacingAndGlyphs">13:58</text><text transform="translate(1141.7,1183.6) rotate(-90)" font-size="20.6" fill="#252e33" textLength="51.6" lengthAdjust="spacingAndGlyphs">13:59</text><text transform="translate(1215.9,1189.0) rotate(-90)" font-size="20.6" fill="#e0353a" textLength="57" lengthAdjust="spacingAndGlyphs">14:00</text><text transform="translate(1290.2,1183.6) rotate(-90)" font-size="20.6" fill="#252e33" textLength="51.6" lengthAdjust="spacingAndGlyphs">14:01</text><text transform="translate(1364.5,1183.6) rotate(-90)" font-size="20.6" fill="#252e33" textLength="51.6" lengthAdjust="spacingAndGlyphs">14:02</text><text transform="translate(1438.7,1183.6) rotate(-90)" font-size="20.6" fill="#252e33" textLength="51.6" lengthAdjust="spacingAndGlyphs">14:03</text><text transform="translate(1513.0,1183.6) rotate(-90)" font-size="20.6" fill="#252e33" textLength="51.6" lengthAdjust="spacingAndGlyphs">14:04</text><text transform="translate(1587.2,1183.6) rotate(-90)" font-size="20.6" fill="#252e33" textLength="51.6" lengthAdjust="spacingAndGlyphs">14:05</text><text transform="translate(1661.5,1183.6) rotate(-90)" font-size="20.6" fill="#252e33" textLength="51.6" lengthAdjust="spacingAndGlyphs">14:06</text><text transform="translate(1735.8,1183.6) rotate(-90)" font-size="20.6" fill="#252e33" textLength="51.6" lengthAdjust="spacingAndGlyphs">14:07</text><text transform="translate(1810.0,1183.6) rotate(-90)" font-size="20.6" fill="#252e33" textLength="51.6" lengthAdjust="spacingAndGlyphs">14:08</text><text transform="translate(1884.3,1183.6) rotate(-90)" font-size="20.6" fill="#252e33" textLength="51.6" lengthAdjust="spacingAndGlyphs">14:09</text><text transform="translate(1958.5,1183.6) rotate(-90)" font-size="20.6" fill="#252e33" textLength="51.6" lengthAdjust="spacingAndGlyphs">14:10</text><text transform="translate(2032.8,1183.6) rotate(-90)" font-size="20.6" fill="#252e33" textLength="51.6" lengthAdjust="spacingAndGlyphs">14:11</text><text transform="translate(2107.1,1183.6) rotate(-90)" font-size="20.6" fill="#252e33" textLength="51.6" lengthAdjust="spacingAndGlyphs">14:12</text><text transform="translate(2181.3,1183.6) rotate(-90)" font-size="20.6" fill="#252e33" textLength="51.6" lengthAdjust="spacingAndGlyphs">14:13</text><text transform="translate(2255.6,1183.6) rotate(-90)" font-size="20.6" fill="#252e33" textLength="51.6" lengthAdjust="spacingAndGlyphs">14:14</text><text transform="translate(2329.8,1183.6) rotate(-90)" font-size="20.6" fill="#252e33" textLength="51.6" lengthAdjust="spacingAndGlyphs">14:15</text><text transform="translate(2404.1,1183.6) rotate(-90)" font-size="20.6" fill="#252e33" textLength="51.6" lengthAdjust="spacingAndGlyphs">14:16</text><text transform="translate(2478.4,1183.6) rotate(-90)" font-size="20.6" fill="#252e33" textLength="51.6" lengthAdjust="spacingAndGlyphs">14:17</text><text transform="translate(2552.6,1183.6) rotate(-90)" font-size="20.6" fill="#252e33" textLength="51.6" lengthAdjust="spacingAndGlyphs">14:18</text><text transform="translate(2626.9,1183.6) rotate(-90)" font-size="20.6" fill="#252e33" textLength="51.6" lengthAdjust="spacingAndGlyphs">14:19</text><text transform="translate(2701.1,1183.6) rotate(-90)" font-size="20.6" fill="#252e33" textLength="51.6" lengthAdjust="spacingAndGlyphs">14:20</text><text transform="translate(2775.4,1265.3) rotate(-90)" font-size="20.6" fill="#e0353a" textLength="133.3" lengthAdjust="spacingAndGlyphs">09-23 14:21</text><rect x="390" y="1308.5" width="21" height="21" fill="#1b7c12" stroke="#2a2a2a" stroke-width="1.5"/><rect x="390" y="1336.5" width="21" height="21" fill="#2774a4" stroke="#2a2a2a" stroke-width="1.5"/><text x="911" y="1299.3" font-size="24" fill="#2e373c" textLength="41" lengthAdjust="spacingAndGlyphs">last</text><text x="1017.4" y="1299.3" font-size="24" fill="#2e373c" textLength="43" lengthAdjust="spacingAndGlyphs">min</text><text x="1124.9" y="1299.3" font-size="24" fill="#2e373c" textLength="41.4" lengthAdjust="spacingAndGlyphs">avg</text><text x="1229" y="1299.3" font-size="24" fill="#2e373c" textLength="49.5" lengthAdjust="spacingAndGlyphs">max</text><text x="423.3" y="1327" font-size="24" fill="#2e373c" textLength="316.2" lengthAdjust="spacingAndGlyphs">Kafka: Bytes in per second</text><text x="797.2" y="1327" font-size="24" fill="#2e373c" textLength="61.2" lengthAdjust="spacingAndGlyphs">[avg]</text><text x="897.1" y="1327" font-size="24" fill="#2e373c" textLength="67" lengthAdjust="spacingAndGlyphs">0 Bps</text><text x="1005.2" y="1327" font-size="24" fill="#2e373c" textLength="67" lengthAdjust="spacingAndGlyphs">0 Bps</text><text x="1113" y="1327" font-size="24" fill="#2e373c" textLength="67" lengthAdjust="spacingAndGlyphs">0 Bps</text><text x="1221" y="1327" font-size="24" fill="#2e373c" textLength="67" lengthAdjust="spacingAndGlyphs">0 Bps</text></svg><div style="position:absolute;left:2850px;top:0;width:30px;height:1800px;background:#f8f8f8;border-left:2px solid #e4e4e4;border-right:2px solid #ececec;box-sizing:border-box"></div><div style="position:absolute;left:2858px;top:6px;width:16px;height:75px;background:#b3b3b3;border-radius:8px"></div>
</body></html>
